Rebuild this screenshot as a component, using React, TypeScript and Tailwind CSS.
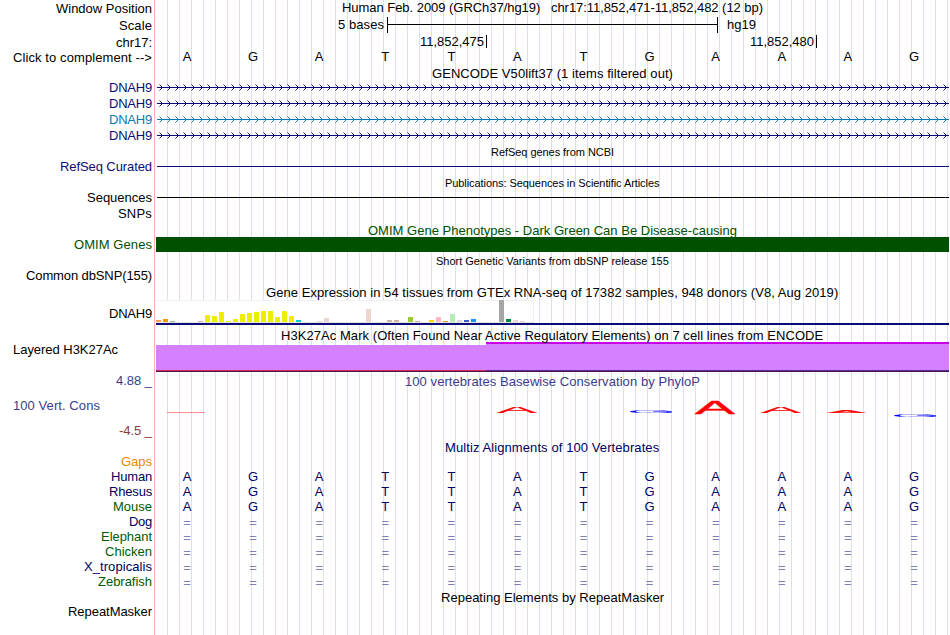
import { clsx } from "clsx";

const FONT = '"Liberation Sans", Arial, sans-serif';
const ctx = document.createElement("canvas").getContext("2d")!;

// Spreads a line of text over a fixed width by adjusting its tracking.
function tracking(text: string, width: number, size: number) {
  ctx.font = `${size}px ${FONT}`;
  return (width - ctx.measureText(text).width) / text.length;
}

function Fit({ text, width, size = 13, className }: { text: string; width: number; size?: number; className?: string }) {
  return (
    <span
      className={clsx("inline-block whitespace-pre", className)}
      style={{ width, letterSpacing: tracking(text, width, size) }}
    >
      {text}
    </span>
  );
}

type Label = { text: string; width: number; h: string; color?: string; left?: boolean };

const labels: Label[] = [
  { text: "Window Position", width: 96, h: "h-[17px]" },
  { text: "Scale", width: 33, h: "h-[17px]" },
  { text: "chr17:", width: 36, h: "h-[15px]" },
  { text: "Click to complement -->", width: 139, h: "h-[30px]" },
  { text: "DNAH9", width: 43, h: "h-[16px]", color: "text-[#0c0c78]" },
  { text: "DNAH9", width: 43, h: "h-[16px]", color: "text-[#0c0c78]" },
  { text: "DNAH9", width: 43, h: "h-[16px]", color: "text-[#0c78b4]" },
  { text: "DNAH9", width: 43, h: "h-[31px]", color: "text-[#0c0c78]" },
  { text: "RefSeq Curated", width: 92, h: "h-[31px]", color: "text-[#0c0c78]" },
  { text: "Sequences", width: 65, h: "h-[16px]" },
  { text: "SNPs", width: 34, h: "h-[31px]" },
  { text: "OMIM Genes", width: 78, h: "h-[31px]", color: "text-[#005000]" },
  { text: "Common dbSNP(155)", width: 126, h: "h-[38px]" },
  { text: "DNAH9", width: 43, h: "h-[36px]" },
  { text: "Layered H3K27Ac", width: 105, h: "h-[31px]", left: true },
  { text: "4.88 _", width: 36, h: "h-[25px]", color: "text-[#3c3c8c]" },
  { text: "100 Vert. Cons", width: 87, h: "h-[25px]", color: "text-[#3c3c8c]", left: true },
  { text: "-4.5 _", width: 33, h: "h-[31px]", color: "text-[#8c3c3c]" },
  { text: "Gaps", width: 31, h: "h-[15px]", color: "text-[#e68a00]" },
  { text: "Human", width: 41, h: "h-[15px]", color: "text-[#000060]" },
  { text: "Rhesus", width: 43, h: "h-[15px]", color: "text-[#000060]" },
  { text: "Mouse", width: 39, h: "h-[15px]", color: "text-[#005a00]" },
  { text: "Dog", width: 23, h: "h-[15px]", color: "text-[#000060]" },
  { text: "Elephant", width: 51, h: "h-[15px]", color: "text-[#005a00]" },
  { text: "Chicken", width: 47, h: "h-[15px]", color: "text-[#005a00]" },
  { text: "X_tropicalis", width: 68, h: "h-[15px]", color: "text-[#000060]" },
  { text: "Zebrafish", width: 54, h: "h-[30px]", color: "text-[#005a00]" },
  { text: "RepeatMasker", width: 84, h: "h-[15px]" },
];

const sequence = "AGATTATGAAAG".split("");

function Title({ text, width, small, className }: { text: string; width: number; small?: boolean; className?: string }) {
  return (
    <div className={clsx("flex justify-center", small ? "h-[13px] text-[11px] leading-[13px]" : "h-[15px]", className)}>
      <Fit text={text} width={width} size={small ? 11 : 13} className="shrink-0" />
    </div>
  );
}

function Bases({ row, className }: { row: string[]; className?: string }) {
  return (
    <div className={clsx("-ml-px grid h-[15px] w-[793px] grid-cols-12 text-center", className)}>
      {row.map((b, i) => (
        <span key={i}>{b}</span>
      ))}
    </div>
  );
}

function Transcript({ className }: { className: string }) {
  return (
    <svg width="792" height="7" className={clsx("ml-0.5 block", className)} fill="none" stroke="currentColor">
      <path d="M0 3.5H792" />
      {Array.from({ length: 99 }, (_, i) => (
        <path key={i} d={`M${i * 8 + 2.5} 0.5l3 3l-3 3`} strokeWidth="0.95" />
      ))}
    </svg>
  );
}

// Bar heights and colours, indexed by tissue.
const tissues: Record<number, [number, string]> = {
  0: [2, "#ffa54f"], 1: [3, "#ee9a00"], 2: [1, "#8fbc8f"], 6: [1, "#cdb79e"],
  7: [7, "#eeee00"], 8: [6, "#eeee00"], 9: [10, "#eeee00"], 10: [1, "#eeee00"],
  11: [3, "#eeee00"], 12: [8, "#eeee00"], 13: [9, "#eeee00"], 14: [10, "#eeee00"],
  15: [11, "#eeee00"], 16: [11, "#eeee00"], 17: [5, "#eeee00"], 18: [11, "#eeee00"],
  19: [6, "#eeee00"], 20: [2, "#00cdcd"], 23: [1, "#eed5d2"], 24: [4, "#eed5d2"],
  30: [13, "#eed5d2"], 33: [2, "#cdb79e"], 34: [2, "#cdb79e"], 36: [5, "#9acd32"],
  37: [1, "#cdb79e"], 39: [2, "#ffd700"], 40: [5, "#ffb6c1"], 41: [1, "#cd9b1d"],
  42: [8, "#b4eeb4"], 43: [2, "#d9d9d9"], 44: [2, "#3a5fcd"], 45: [3, "#1e90ff"],
  49: [22, "#a6a6a6"], 50: [3, "#008b45"], 51: [2, "#eed5d2"], 52: [1, "#eed5d2"],
};

function Expression() {
  return (
    <div className="ml-px mr-px border-b-2 border-[#0c0c78]">
      <div className="flex h-[23px] w-[378px] items-end gap-0.5 border-y border-r border-[#f0f0f0] border-b-[#e4e4e4] bg-white">
        {Array.from({ length: 53 }, (_, i) => (
          <div
            key={i}
            className={clsx("w-[5px] shrink-0", i === 49 && "-mt-px")}
            style={{ height: tissues[i]?.[0] ?? 0, background: tissues[i]?.[1] }}
          />
        ))}
      </div>
    </div>
  );
}

// Conservation letters: [letter, left, width, top, bottom] inside the logo strip.
const logo: [string, number, number, number, number][] = [
  ["A", 342, 40, 12, 18],
  ["G", 475, 43, 15, 18],
  ["A", 540, 40, 6, 19],
  ["A", 606, 40, 12, 18],
  ["A", 672, 39, 15, 18],
  ["G", 739, 43, 19, 22],
];

function Logo() {
  return (
    <svg width="794" height="30" className="block" fontSize="100">
      <path d="M12 17.5H50" stroke="#ff0000" strokeOpacity="0.45" />
      {logo.map(([c, x, w, top, bottom], i) => {
        const [bearing, ink] = c === "A" ? [0.3, 66.2] : [5, 67];
        const sx = w / ink;
        const sy = (bottom - top) / 69;
        const color = c === "A" ? "#ff0000" : "#0000ff";
        return (
          <text
            key={i}
            transform={`translate(${x - bearing * sx} ${bottom}) scale(${sx} ${sy})`}
            fill={color}
            stroke={color}
            strokeWidth={c === "A" ? 1.5 : 0}
          >
            {c}
          </text>
        );
      })}
    </svg>
  );
}

export default function App() {
  return (
    <div className="flex h-[635px] w-[950px] overflow-hidden bg-white font-['Liberation_Sans',Arial,sans-serif] text-[13px] leading-[15px] text-black">
      <div className="flex w-[154px] shrink-0 flex-col pt-px">
        {labels.map((l, i) => (
          <div
            key={i}
            className={clsx("flex shrink-0", l.h, l.color, l.left ? "justify-start pl-[13px]" : "justify-end pr-0.5")}
          >
            <Fit text={l.text} width={l.width} />
          </div>
        ))}
      </div>
      <div className="w-px shrink-0 bg-[#ffb4b4]" />
      <div className="relative w-[795px]">
        <div className="absolute inset-y-0 left-3 right-0 bg-[linear-gradient(to_right,#dcdcff_1px,transparent_1px)] bg-[length:12px_100%]" />
        <div className="relative flex flex-col">
          <Title text="Human Feb. 2009 (GRCh37/hg19)   chr17:11,852,471-11,852,482 (12 bp)" width={421} />
          <div className="mt-0.5 flex h-4 pl-[183px]">
            <Fit text="5 bases" width={46} />
            <div className="ml-[3px] flex w-[331px] items-center border-x border-black">
              <div className="mb-px h-px w-full bg-black" />
            </div>
            <Fit text="hg19" width={29} className="ml-[9px]" />
          </div>
          <div className="mt-0.5 flex h-[13px] leading-[14px]">
            <div className="flex w-[332px] justify-end border-r border-black pr-0.5">
              <Fit text="11,852,475" width={64} />
            </div>
            <div className="flex w-[330px] justify-end border-r border-black pr-0.5">
              <Fit text="11,852,480" width={64} />
            </div>
          </div>
          <Bases row={sequence} className="mt-px" />
          <Title text="GENCODE V50lift37 (1 items filtered out)" width={241} className="mt-0.5" />
          <div className="mt-[3px] flex flex-col gap-[9px]">
            <Transcript className="text-[#0c0c78]" />
            <Transcript className="text-[#0c0c78]" />
            <Transcript className="text-[#0c78b4]" />
            <Transcript className="text-[#0c0c78]" />
          </div>
          <Title small text="RefSeq genes from NCBI" width={123} className="mt-[7px]" />
          <div className="ml-0.5 mr-px mt-[7px] h-px bg-[#0c0c78]" />
          <Title small text="Publications: Sequences in Scientific Articles" width={215} className="mt-[10px]" />
          <div className="ml-0.5 mr-px mt-[7px] h-px bg-black" />
          <Title text="OMIM Gene Phenotypes - Dark Green Can Be Disease-causing" width={369} className="mt-[25px] text-[#005000]" />
          <div className="-mt-px ml-px mr-px h-[15px] bg-[#005000]" />
          <Title small text="Short Genetic Variants from dbSNP release 155" width={233} className="mt-[3px]" />
          <Title text="Gene Expression in 54 tissues from GTEx RNA-seq of 17382 samples, 948 donors (V8, Aug 2019)" width={573} className="mt-[17px]" />
          <Expression />
          <Title text="H3K27Ac Mark (Often Found Near Active Regulatory Elements) on 7 cell lines from ENCODE" width={543} className="relative z-10 mt-[3px]" />
          <div className="-mt-px ml-px mr-px flex h-[30px] items-end border-b border-[#501440]">
            <div className="h-[26px] w-[330px] border-b border-[#d02860] bg-[#d580ff]" />
            <div className="h-[29px] flex-1 border-b border-t-2 border-b-[#5030a8] border-t-[#c800e6] bg-[#d580ff]" />
          </div>
          <Title text="100 vertebrates Basewise Conservation by PhyloP" width={295} className="mt-0.5 text-[#3c3c8c]" />
          <div className="mt-[6px]">
            <Logo />
          </div>
          <Title text="Multiz Alignments of 100 Vertebrates" width={215} className="mt-[15px] text-[#000060]" />
          <div className="mt-[14px] text-[#000060]">
            {[0, 1, 2].map((i) => (
              <Bases key={i} row={sequence} />
            ))}
          </div>
          <div className="mb-[-1px] pt-px text-[#8080b4]">
            {[0, 1, 2, 3, 4].map((i) => (
              <Bases key={i} row={sequence.map(() => "=")} />
            ))}
          </div>
          <Title text="Repeating Elements by RepeatMasker" width={223} className="mt-px" />
        </div>
      </div>
    </div>
  );
}
